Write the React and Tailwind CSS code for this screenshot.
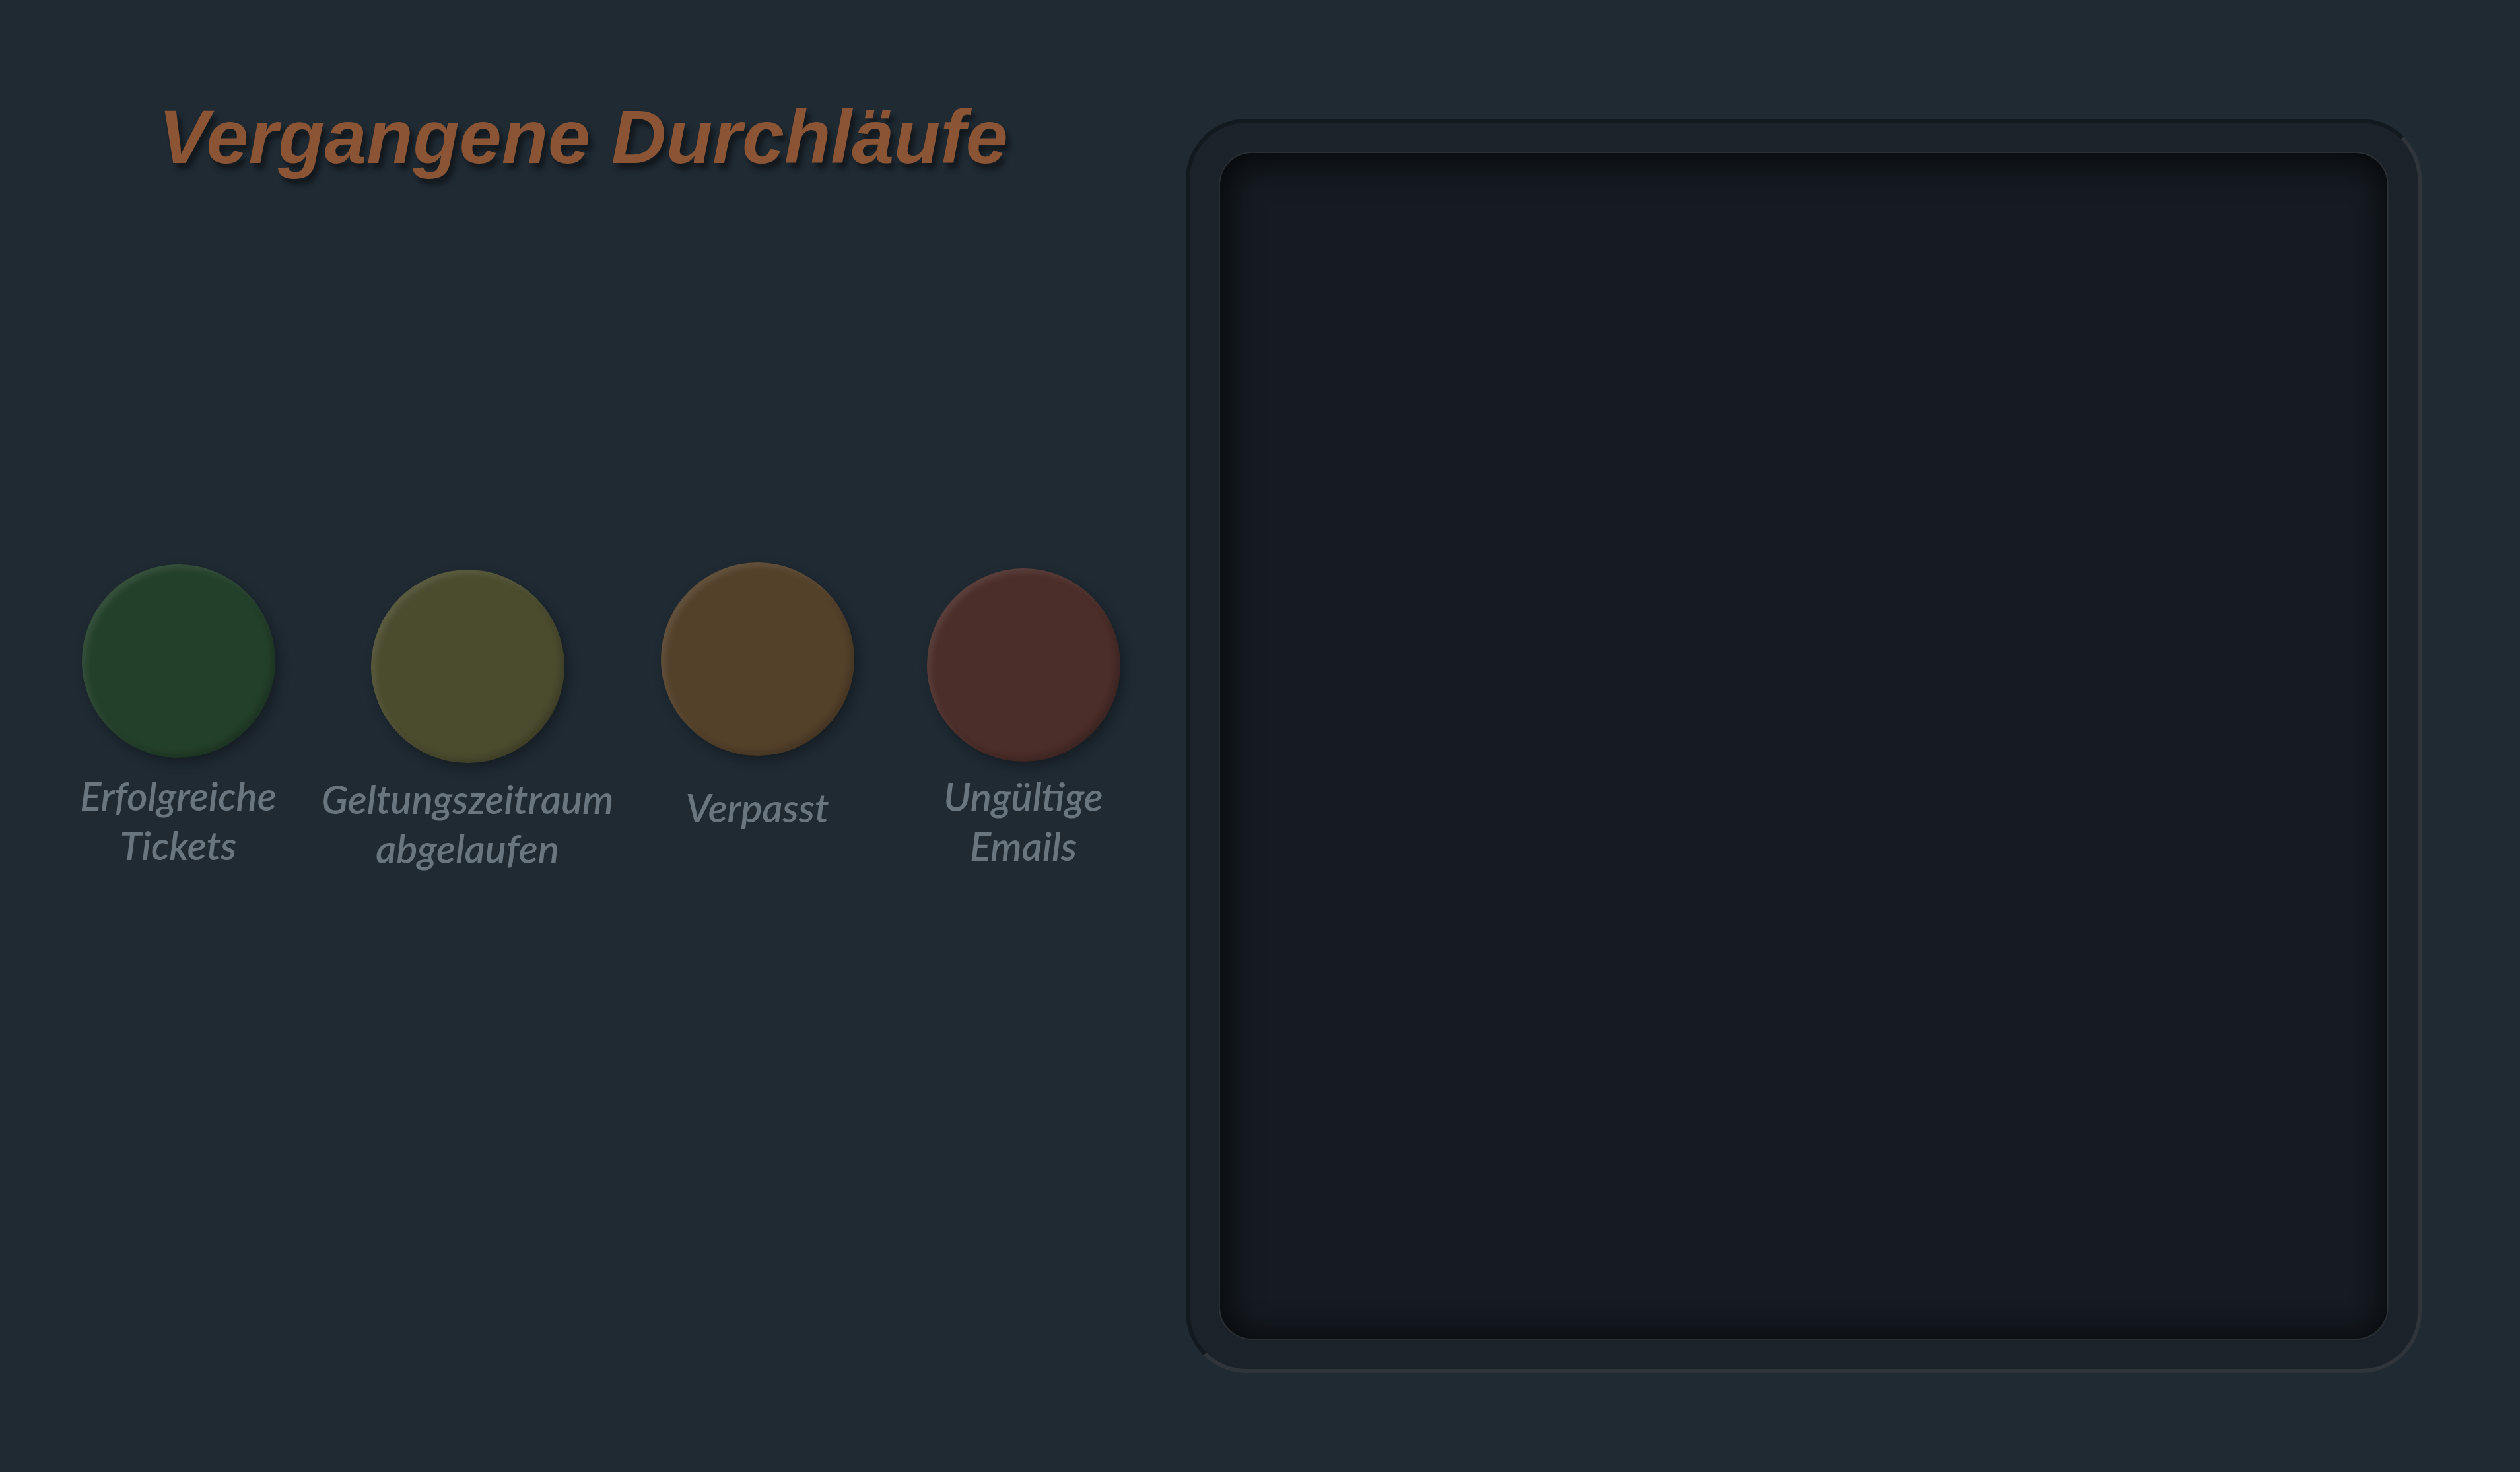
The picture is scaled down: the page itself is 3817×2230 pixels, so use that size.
import React from "react";

const items = [
  { lines: ["Erfolgreiche", "Tickets"], w: "w-[340px]", circleMt: "mt-[5px]", labelMt: "mt-[20px]", color: "bg-[#23402a]" },
  { lines: ["Geltungszeitraum", "abgelaufen"], w: "w-[536px]", circleMt: "mt-[13px]", labelMt: "mt-[17px]", color: "bg-[#4b4c2e]" },
  { lines: ["Verpasst"], w: "w-[342px]", circleMt: "mt-[2px]", labelMt: "mt-[41px]", color: "bg-[#54412a]" },
  { lines: ["Ungültige", "Emails"], w: "w-[464px]", circleMt: "mt-[11px]", labelMt: "mt-[15px]", color: "bg-[#4b2d29]" },
];

export default function App() {
  return (
    <div className="w-[3817px] h-[2230px] bg-[#1f2a33] flex overflow-hidden">
      <div className="w-[1796px] flex flex-col pt-[150px]">
        <h1
          className="pl-[240px] text-[115px] leading-none font-bold italic text-[#8b5535] [text-shadow:6px_9px_8px_rgba(0,0,0,0.45)]"
          style={{ fontFamily: '"Liberation Sans", Arial, sans-serif' }}
        >
          Vergangene Durchläufe
        </h1>
        <div className="mt-[585px] pl-[100px] flex items-start">
          {items.map((it) => (
            <div key={it.lines[0]} className={`${it.w} flex flex-col items-center shrink-0`}>
              <div
                className={`${it.circleMt} w-[293px] h-[293px] rounded-full ${it.color} shadow-[inset_6px_6px_10px_rgba(255,255,255,0.09),inset_-6px_-6px_10px_rgba(0,0,0,0.18),6px_8px_18px_rgba(0,0,0,0.3)]`}
              />
              <div
                className={`${it.labelMt} text-[60px] leading-[75px] italic font-semibold text-[#69767f] text-center`}
                style={{ fontFamily: 'Lato, "Open Sans", sans-serif' }}
              >
                {it.lines.map((l) => (
                  <div key={l}>{l}</div>
                ))}
              </div>
            </div>
          ))}
        </div>
      </div>
      <div className="mt-[180px] w-[1872px] h-[1900px] rounded-[92px] border-[6px] border-t-[#121a20] border-l-[#121a20] border-r-[#30353b] border-b-[#30353b] bg-[#1c2229] p-[44px] flex">
        <div className="flex-1 rounded-[50px] border-2 border-[#2a2f34] bg-[#151b21] shadow-[inset_12px_16px_50px_rgba(0,0,0,0.55),inset_-10px_-10px_40px_rgba(0,0,0,0.4)]" />
      </div>
    </div>
  );
}
